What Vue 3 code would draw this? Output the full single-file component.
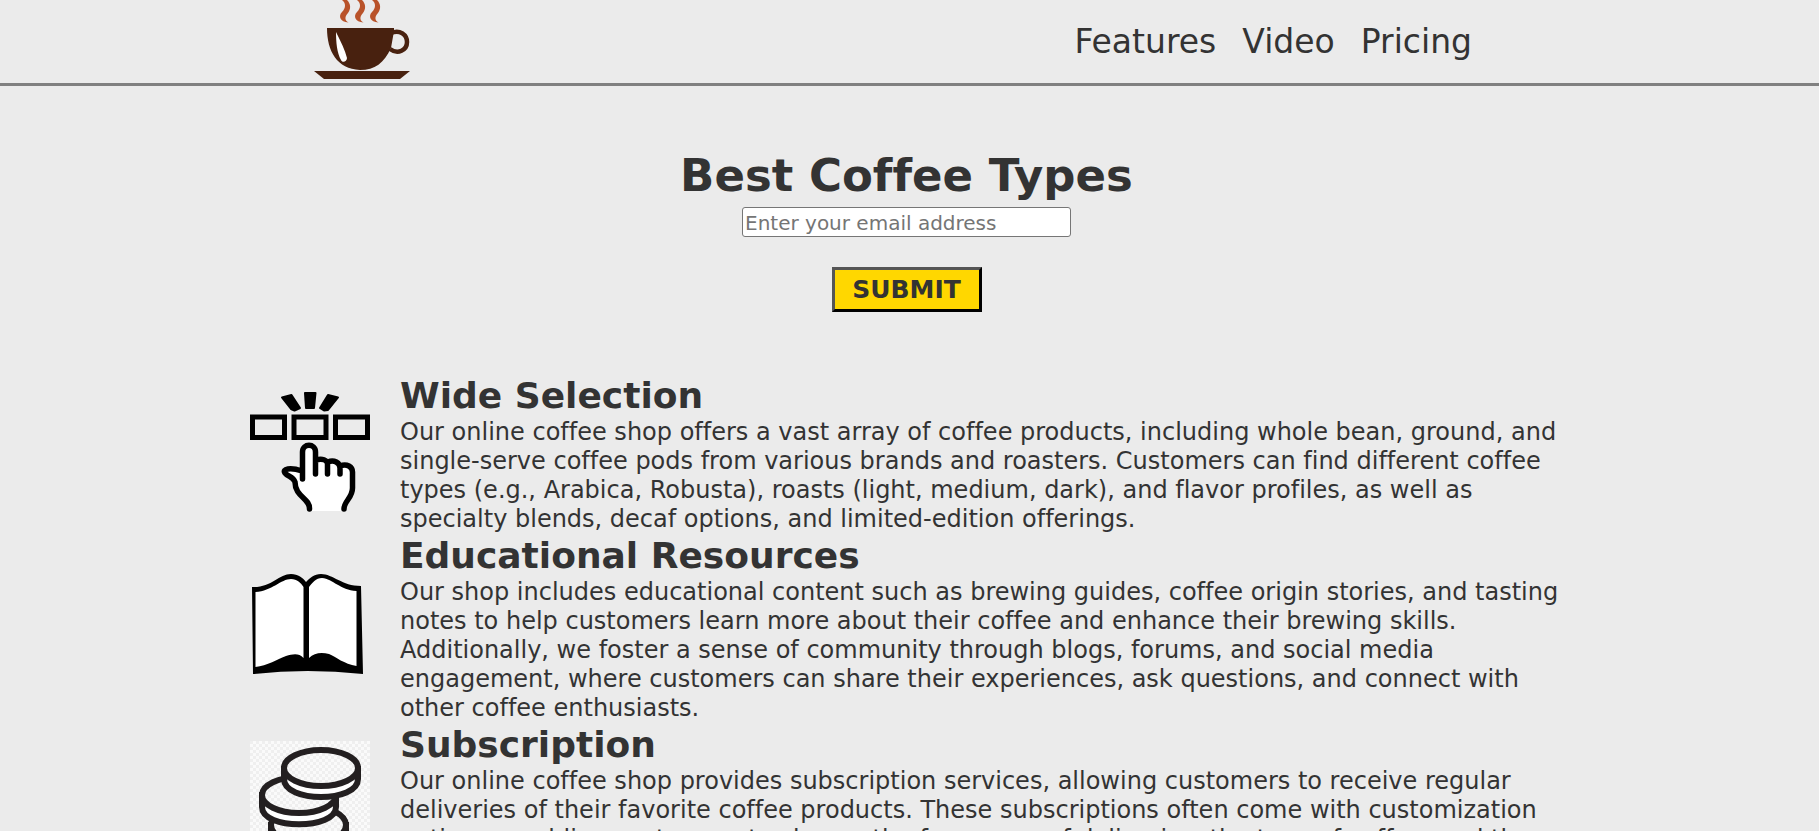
<script setup>
const links = ['Features', 'Video', 'Pricing']
const features = [
  {
    icon: 'select',
    title: 'Wide Selection',
    text: 'Our online coffee shop offers a vast array of coffee products, including whole bean, ground, and single-serve coffee pods from various brands and roasters. Customers can find different coffee types (e.g., Arabica, Robusta), roasts (light, medium, dark), and flavor profiles, as well as specialty blends, decaf options, and limited-edition offerings.'
  },
  {
    icon: 'book',
    title: 'Educational Resources',
    text: 'Our shop includes educational content such as brewing guides, coffee origin stories, and tasting notes to help customers learn more about their coffee and enhance their brewing skills. Additionally, we foster a sense of community through blogs, forums, and social media engagement, where customers can share their experiences, ask questions, and connect with other coffee enthusiasts.'
  },
  {
    icon: 'coins',
    title: 'Subscription',
    text: 'Our online coffee shop provides subscription services, allowing customers to receive regular deliveries of their favorite coffee products. These subscriptions often come with customization options, enabling customers to choose the frequency of deliveries, the type of coffee, and the'
  }
]
</script>

<template>
  <div class="page">
    <header class="header">
      <svg class="logo" viewBox="0 0 110 83" role="img" aria-label="Coffee cup">
        <g fill="#b9532a">
          <path d="M39 0H44C48 4 48 9 45 13C42 16 41 20 45.500 22.500C37 22 35 16 39 12C43 8 43 3 39 0Z" />
          <path d="M54 0H59C63 4 63 9 60 13C57 16 56 20 60.500 22.500C52 22 50 16 54 12C58 8 58 3 54 0Z" />
          <path d="M69 0H74C78 4 78 9 75 13C72 16 71 20 75.500 22.500C67 22 65 16 69 12C73 8 73 3 69 0Z" />
        </g>
        <path d="M24 28H91V31L88 48C81 63 72 70 57 70C34 69 24 51 24 28ZM11 71H107L97 79H21Z" fill="#48210f" />
        <path d="M88 33C97 29 104 35 104 42C104 50 95 55 87 49" fill="none" stroke="#48210f" stroke-width="4.500" />
        <path d="M33 32C38 42 42 50 44 58C44 62 39 63 38 60C34 53 33 42 33 32Z" fill="#fff" />
      </svg>
      <nav class="nav">
        <a v-for="link in links" :key="link" :href="'#' + link.toLowerCase()">{{ link }}</a>
      </nav>
    </header>

    <main class="main">
      <form class="signup" @submit.prevent>
        <h1>Best Coffee Types</h1>
        <input type="email" placeholder="Enter your email address" aria-label="Email address" />
        <button type="submit">SUBMIT</button>
      </form>

      <section v-for="item in features" :key="item.title" class="feature">
        <svg v-if="item.icon === 'select'" class="icon" viewBox="0 0 120 124" aria-hidden="true">
          <path d="M32 5.500L41.500 3L50 16L44.500 18.500L41 17ZM55 1H65.500L64 16H56ZM78 3L88 5.500L78 18L74 18.500L70 16Z" stroke="#000" stroke-width="2" stroke-linejoin="round" />
          <path d="M2.500 25H34.500V45.500H2.500ZM44 25H76V45.500H44ZM85.500 25H117.500V45.500H85.500Z" fill="none" stroke="#000" stroke-width="5" />
          <path d="M59.500 119C60 107 45 105 45 89L42 84C33 82 31 77 38 77L52 80V60C52 51 65 51 65 60V69C71 66 76 67 77.500 71C84 68 88 70 90 74C97 71 102.500 75 102.500 80V96C102 106 94 109 94 119Z" fill="#fff" />
          <path d="M59.500 117C60 106 45 105 45 90C43 84 38 85 35 81C32 77 40 75 52 79M52.500 87V60C52.500 51 65.500 51 65.500 60V82M66 68C72 66 77.500 68 77.500 72V82M78 70C84 67 90 71 90 76V82M90 74C97 71 102.500 75 102.500 80V96C102.500 106 94 109 94 117" fill="none" stroke="#000" stroke-width="5.500" stroke-linecap="round" />
        </svg>
        <svg v-else-if="item.icon === 'book'" class="icon" viewBox="0 0 120 124" aria-hidden="true">
          <path d="M2 35C21 36 29 22 41 22C48 22 53 26 56 30C60 26 64 22 71 22C83 22 92 34 111 34L113 122Q57 116 3 122Z" />
          <path d="M5.500 40C22 39 31 27 41 27C47 27 51 31 53.500 35V106C49 101 43 102 36 104C28 107 17 114 5.500 115ZM59 35C62 31 66 26 72 26C83 27 90 38 106.500 39V114C94 112 86 105 79 102C71 100 64 101 59 106Z" fill="#fff" />
        </svg>
        <svg v-else class="icon" viewBox="0 0 120 124" aria-hidden="true">
          <defs>
            <pattern id="checks" width="6" height="6" patternUnits="userSpaceOnUse">
              <rect width="6" height="6" fill="#fafafa" />
              <path d="M0 0H3V3H0ZM3 3H6V6H3Z" fill="#efefef" />
            </pattern>
          </defs>
          <rect width="120" height="120" fill="url(#checks)" />
          <g fill="#fff" stroke="#231f20" stroke-width="6">
            <path d="M21 84V96C21 120 96 120 96 96V84Z" />
            <ellipse cx="58.500" cy="84" rx="37.500" ry="19" fill="url(#checks)" />
            <path d="M12 54V66C12 89 86 89 86 66V54Z" />
            <ellipse cx="49" cy="54" rx="37" ry="18" fill="url(#checks)" />
            <path d="M34 28V38C34 62 108 62 108 38V28Z" />
            <ellipse cx="71" cy="27" rx="37" ry="18" fill="url(#checks)" />
          </g>
        </svg>
        <div class="copy">
          <h2>{{ item.title }}</h2>
          <p>{{ item.text }}</p>
        </div>
      </section>
    </main>
  </div>
</template>

<style>
body {
  margin: 0;
  background: #ebebeb;
}
</style>

<style scoped>
.page {
  color: #333;
  font-family: Verdana, "DejaVu Sans", sans-serif;
  font-variant-ligatures: none;
}
.header {
  display: flex;
  align-items: center;
  justify-content: space-between;
  padding: 0 347px 0 303px;
  border-bottom: 3px solid #808080;
}
.logo {
  display: block;
  width: 110px;
  height: 83px;
}
.nav {
  display: flex;
  gap: 26px;
  font-size: 33px;
  line-height: 40px;
}
.nav a {
  color: inherit;
  text-decoration: none;
}
.main {
  padding: 62px 256px 0 250px;
}
.signup {
  display: flex;
  flex-direction: column;
  align-items: center;
  margin-bottom: 62px;
}
h1,
h2,
p {
  margin: 0;
}
h1 {
  font-size: 45px;
  line-height: 55px;
}
input {
  box-sizing: border-box;
  width: 329px;
  height: 30px;
  margin: 4px 0 30px;
  padding: 2px 2px 0;
  border: 1px solid #767676;
  border-radius: 3px;
  background: #fff;
  font: 20px Verdana, "DejaVu Sans", sans-serif;
}
input::placeholder {
  color: #757575;
}
button {
  box-sizing: border-box;
  width: 150px;
  height: 45px;
  padding: 0;
  border: 3px solid;
  border-color: #555 #000 #000 #555;
  background: #ffd700;
  color: #333;
  font: bold 25px Verdana, "DejaVu Sans", sans-serif;
}
.feature {
  display: flex;
  align-items: flex-start;
  gap: 30px;
}
.icon {
  flex: none;
  width: 120px;
  height: 124px;
  margin-top: 18px;
}
.copy {
  flex: 1;
}
h2 {
  font-size: 36px;
  line-height: 44px;
}
p {
  font-size: 24px;
  line-height: 29px;
}
</style>
